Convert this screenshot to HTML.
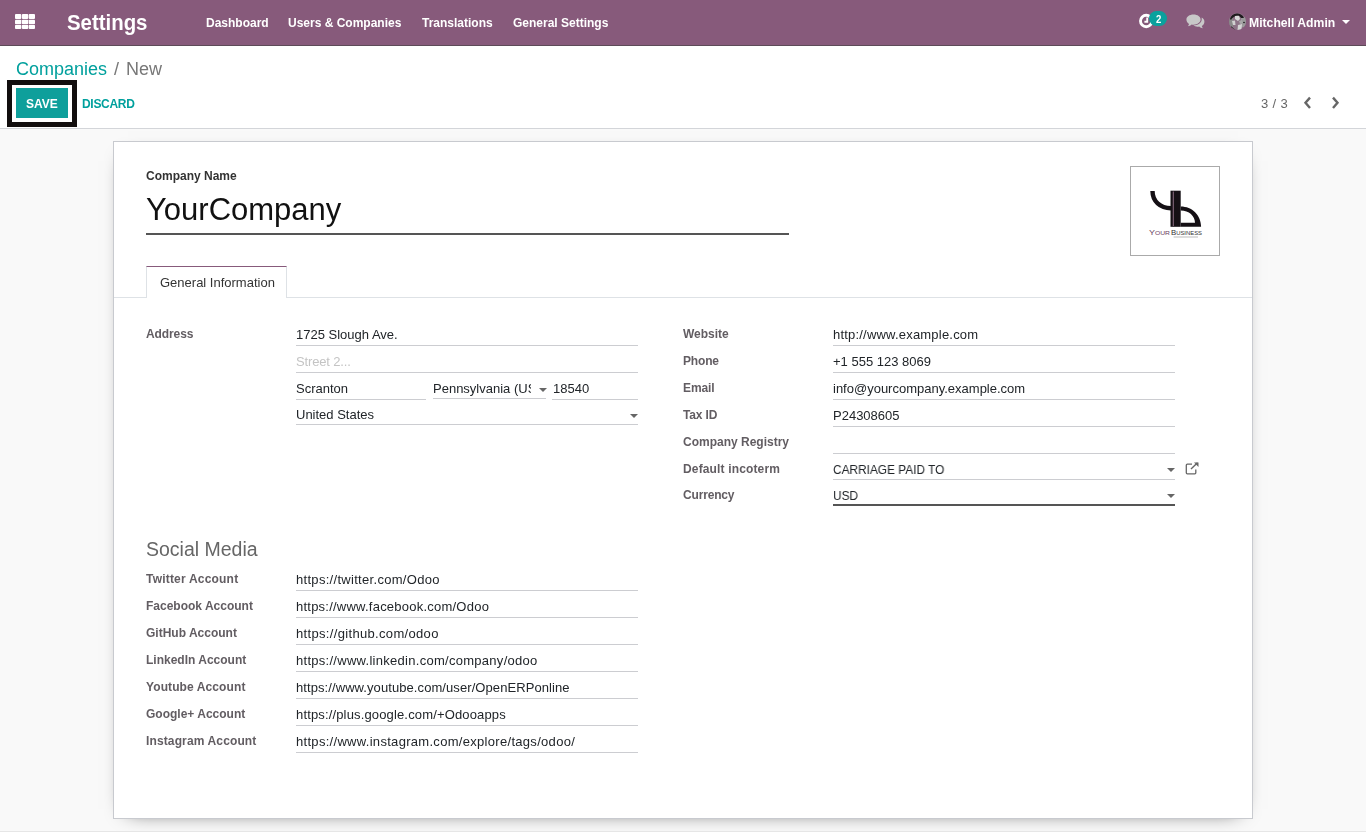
<!DOCTYPE html>
<html><head><meta charset="utf-8">
<style>
html,body{margin:0;padding:0;}
body{width:1366px;height:832px;position:relative;overflow:hidden;background:#f9f9f9;font-family:"Liberation Sans",sans-serif;}
.a{position:absolute;}
.t{position:absolute;white-space:nowrap;line-height:1;will-change:transform;}
.nav{left:0;top:0;width:1366px;height:45px;background:#875a7b;border-bottom:1px solid #5d4b58;}
.nm{font-size:12px;font-weight:700;color:#fff;top:17px;}
.cp{left:0;top:46px;width:1366px;height:82px;background:#fff;border-bottom:1px solid #d3d5d9;}
.sheet{left:113px;top:141px;width:1138px;height:676px;background:#fff;border:1px solid #c8cacf;box-shadow:0 5px 20px -15px #000;}
.lbl{font-size:12px;font-weight:700;color:#625d62;}
.val{font-size:13px;color:#212529;}
.ln{position:absolute;height:1px;background:#cccdd1;}
.car{position:absolute;width:0;height:0;border-left:4px solid transparent;border-right:4px solid transparent;border-top:4px solid #666;}
</style></head>
<body>
<!-- navbar -->
<div class="a nav"></div>
<svg class="a" style="left:15px;top:14px" width="20" height="15" viewBox="0 0 20 15">
<g fill="#fff">
<rect x="0" y="0" width="6.3" height="5" rx="0.9"/><rect x="6.9" y="0" width="6.3" height="5" rx="0.9"/><rect x="13.7" y="0" width="6.3" height="5" rx="0.9"/>
<rect x="0" y="5.7" width="6.3" height="4.4" rx="0.9"/><rect x="6.9" y="5.7" width="6.3" height="4.4" rx="0.9"/><rect x="13.7" y="5.7" width="6.3" height="4.4" rx="0.9"/>
<rect x="0" y="10.8" width="6.3" height="4.2" rx="0.9"/><rect x="6.9" y="10.8" width="6.3" height="4.2" rx="0.9"/><rect x="13.7" y="10.8" width="6.3" height="4.2" rx="0.9"/>
</g></svg>
<div class="t" style="left:67px;top:12px;font-size:20.4px;font-weight:700;color:#fff;transform:scaleY(1.07);transform-origin:0 0">Settings</div>
<div class="t nm" style="left:206px">Dashboard</div>
<div class="t nm" style="left:288px">Users &amp; Companies</div>
<div class="t nm" style="left:422px">Translations</div>
<div class="t nm" style="left:513px">General Settings</div>

<!-- clock icon -->
<svg class="a" style="left:1138px;top:13px" width="16" height="16" viewBox="0 0 16 16">
<circle cx="8.2" cy="8" r="5.7" fill="none" stroke="#fff" stroke-width="2.9"/>
<path d="M9.2 4.5 V8.8 H6.4" fill="none" stroke="#fff" stroke-width="1.9"/>
</svg>
<div class="a" style="left:1149px;top:11px;width:18px;height:15px;border-radius:7.5px;background:#0aa19d"></div>
<div class="t" style="left:1155.6px;top:14px;font-size:9.6px;font-weight:700;color:#fff;transform:scaleY(1.1);transform-origin:0 0">2</div>
<!-- chat icon -->
<svg class="a" style="left:1186px;top:14px" width="19" height="15" viewBox="0 0 19 15">
<path d="M7.5 0.5 C11.6 0.5 14.6 2.8 14.6 5.6 C14.6 8.4 11.6 10.7 7.5 10.7 C6.8 10.7 6.2 10.6 5.6 10.5 C4.6 11.4 3.2 12.1 1.8 12.3 C2.4 11.6 2.9 10.8 3 9.9 C1.4 9 0.4 7.4 0.4 5.6 C0.4 2.8 3.4 0.5 7.5 0.5 Z" fill="#c8c8c8"/>
<path d="M15.7 3.6 C17.3 4.5 18.4 6 18.4 7.7 C18.4 9.5 17.4 11 15.8 11.9 C15.9 12.8 16.4 13.6 17 14.3 C15.6 14.1 14.2 13.4 13.2 12.5 C12.6 12.7 12 12.7 11.4 12.7 C9.8 12.7 8.4 12.3 7.3 11.6 C11.9 11.5 15.7 8.9 15.7 5.6 Z" fill="#c8c8c8"/>
</svg>
<!-- avatar -->
<svg class="a" style="left:1229px;top:13px" width="17" height="17" viewBox="0 0 17 17">
<defs><clipPath id="cc"><circle cx="8.5" cy="8.5" r="8.5"/></clipPath></defs>
<g clip-path="url(#cc)">
<rect width="17" height="17" fill="#8d7387"/>
<rect x="0" y="4" width="4" height="10" fill="#8a8a8a"/>
<rect x="12" y="4" width="5" height="10" fill="#9a9a9a"/>
<path d="M1 6 C2 2 5 0.5 8.5 0.5 C11 0.5 14 2 15 5 L12 5 C11 3 9 2.5 7 3 C5 3.5 3 5 2 7 Z" fill="#1e1a1d"/>
<path d="M6 3 L10 2.8 L11 6 L9 8 L6 6 Z" fill="#d8d8d8"/>
<path d="M3 8 L6 7.5 L6.5 12 L4 12 Z" fill="#d0d0d0"/>
<path d="M9 12 L13 11 L12.5 17 L8.5 17 Z" fill="#d4d4d4"/>
<path d="M10 8 L13 7 L14 10 L11 11 Z" fill="#a8a8a8"/>
<path d="M2.5 13 C3.5 15 5 16 6.5 16.5 L5.5 17 L2 15 Z" fill="#222"/>
<circle cx="15" cy="9.5" r="0.8" fill="#111"/>
</g></svg>
<div class="t nm" style="left:1249px;font-size:12.2px">Mitchell Admin</div>
<div class="car" style="left:1342px;top:20px;border-top-color:#fff;border-left-width:4px;border-right-width:4px"></div>

<!-- control panel -->
<div class="a cp"></div>
<div class="t" style="left:16px;top:60px;font-size:18px;color:#00a09d">Companies</div>
<div class="t" style="left:113.5px;top:60px;font-size:18px;color:#777">/</div>
<div class="t" style="left:126.3px;top:60px;font-size:18px;color:#777">New</div>
<div class="a" style="left:7px;top:80px;width:60px;height:37px;border:5px solid #120e0e;background:#fff"></div>
<div class="a" style="left:16px;top:88px;width:52px;height:30px;background:#0e9f9b"></div>
<div class="t" style="left:26px;top:98px;font-size:12px;font-weight:700;color:#fff">SAVE</div>
<div class="t" style="left:81.5px;top:98px;font-size:12px;font-weight:700;color:#00a09d;letter-spacing:-0.3px">DISCARD</div>
<div class="t" style="left:1261px;top:97px;font-size:13px;color:#666;letter-spacing:0.35px">3 / 3</div>
<svg class="a" style="left:1302px;top:96px" width="40" height="14" viewBox="0 0 40 14">
<path d="M8 1.6 L3.5 6.8 L8 12" fill="none" stroke="#666" stroke-width="2.4"/>
<path d="M31 1.6 L35.5 6.8 L31 12" fill="none" stroke="#666" stroke-width="2.4"/>
</svg>

<!-- sheet -->
<div class="a sheet"></div>
<div class="t" style="left:146px;top:170px;font-size:12px;font-weight:700;color:#333">Company Name</div>
<div class="t" style="left:146px;top:194px;font-size:31px;color:#111">YourCompany</div>
<div class="a" style="left:146px;top:233px;width:643px;height:2px;background:#555"></div>

<!-- logo -->
<div class="a" style="left:1130px;top:166px;width:88px;height:88px;border:1px solid #aaa;background:#fff"></div>
<svg class="a" style="left:1131px;top:167px" width="88" height="88" viewBox="0 0 88 88">
<path d="M21.5 24 C21.5 34 29 41.2 40 41.2" fill="none" stroke="#151015" stroke-width="4.4"/>
<rect x="39.5" y="23.7" width="10.2" height="36.1" fill="#151015"/><rect x="41.8" y="24.5" width="0.9" height="34.5" fill="#9a7a90"/>
<path d="M49.7 39.4 C61 39.4 70.1 48 70.1 59.8 L49.7 59.8 Z M49.7 43.5 L49.7 55.8 L64 55.8 C64 49 58 43.5 49.7 43.5 Z" fill="#151015" fill-rule="evenodd"/>
<text x="18" y="68" font-family="Liberation Sans" font-size="6.4" fill="#6a3d5e" textLength="21" lengthAdjust="spacingAndGlyphs">Y<tspan font-size="4.8">OUR</tspan></text>
<text x="40" y="68" font-family="Liberation Sans" font-size="6.4" fill="#333" textLength="31" lengthAdjust="spacingAndGlyphs">B<tspan font-size="4.8">USINESS</tspan></text>
<rect x="42.6" y="69.5" width="24.4" height="1" fill="#bbb"/>
</svg>

<!-- tabs -->
<div class="ln" style="left:114px;top:297px;width:1138px;background:#dee2e6"></div>
<div class="a" style="left:146px;top:266px;width:139px;height:31px;border:1px solid #dee2e6;border-top-color:#875a7b;border-bottom:none;background:#fff"></div>
<div class="t" style="left:159.5px;top:276px;font-size:13px;color:#333">General Information</div>

<!-- left group -->
<div class="t lbl" style="left:146px;top:328px;letter-spacing:-0.1px">Address</div>
<div class="t val" style="left:296px;top:328px">1725 Slough Ave.</div>
<div class="ln" style="left:296px;top:345px;width:342px"></div>
<div class="t val" style="left:296px;top:355px;color:#c4c4c4;letter-spacing:-0.15px">Street 2...</div>
<div class="ln" style="left:296px;top:372px;width:342px"></div>
<div class="t val" style="left:296px;top:382px">Scranton</div>
<div class="ln" style="left:296px;top:399px;width:130px"></div>
<div class="a" style="left:433px;top:381px;width:98px;height:16px;overflow:hidden"><div class="t val" style="left:0;top:1px">Pennsylvania (US)</div></div>
<div class="car" style="left:538.5px;top:388px"></div>
<div class="ln" style="left:433px;top:398px;width:113px"></div>
<div class="t val" style="left:553px;top:382px">18540</div>
<div class="ln" style="left:552px;top:399px;width:86px"></div>
<div class="t val" style="left:296px;top:408px">United States</div>
<div class="car" style="left:630px;top:414px"></div>
<div class="ln" style="left:296px;top:424px;width:342px"></div>

<!-- right group -->
<div class="t lbl" style="left:683px;top:328px">Website</div>
<div class="t val" style="left:833px;top:328px;letter-spacing:0.2px">http://www.example.com</div>
<div class="ln" style="left:833px;top:345px;width:342px"></div>
<div class="t lbl" style="left:683px;top:355px;letter-spacing:-0.17px">Phone</div>
<div class="t val" style="left:833px;top:355px">+1 555 123 8069</div>
<div class="ln" style="left:833px;top:372px;width:342px"></div>
<div class="t lbl" style="left:683px;top:382px;letter-spacing:-0.09px">Email</div>
<div class="t val" style="left:833px;top:382px">info@yourcompany.example.com</div>
<div class="ln" style="left:833px;top:399px;width:342px"></div>
<div class="t lbl" style="left:683px;top:409px;letter-spacing:-0.15px">Tax ID</div>
<div class="t val" style="left:833px;top:409px">P24308605</div>
<div class="ln" style="left:833px;top:426px;width:342px"></div>
<div class="t lbl" style="left:683px;top:436px">Company Registry</div>
<div class="ln" style="left:833px;top:453px;width:342px"></div>
<div class="t lbl" style="left:683px;top:463px;letter-spacing:0.15px">Default incoterm</div>
<div class="t val" style="left:833px;top:463px;transform:scaleX(0.912);transform-origin:0 0">CARRIAGE PAID TO</div>
<div class="car" style="left:1167px;top:468px"></div>
<div class="ln" style="left:833px;top:479px;width:342px"></div>
<svg class="a" style="left:1185px;top:462px" width="15" height="13" viewBox="0 0 15 13">
<path d="M7 2.2 H2.3 Q1.3 2.2 1.3 3.2 V10.8 Q1.3 11.8 2.3 11.8 H9.8 Q10.8 11.8 10.8 10.8 V7.5" fill="none" stroke="#666" stroke-width="1.3"/>
<path d="M6 7 L12.5 0.8" fill="none" stroke="#666" stroke-width="1.4"/>
<path d="M9 0.5 H13.5 V5 Z" fill="#666"/>
</svg>
<div class="t lbl" style="left:683px;top:489px;letter-spacing:-0.17px">Currency</div>
<div class="t val" style="left:833px;top:489px;transform:scaleX(0.912);transform-origin:0 0">USD</div>
<div class="car" style="left:1167px;top:494px"></div>
<div class="a" style="left:833px;top:504px;width:342px;height:2px;background:#555"></div>

<!-- social media -->
<div class="t" style="left:146px;top:540px;font-size:19.5px;color:#666">Social Media</div>
<div class="t lbl" style="left:146px;top:573px;letter-spacing:0.2px">Twitter Account</div>
<div class="t val" style="left:296px;top:573px;letter-spacing:0.3px">https://twitter.com/Odoo</div>
<div class="ln" style="left:296px;top:590px;width:342px"></div>
<div class="t lbl" style="left:146px;top:600px">Facebook Account</div>
<div class="t val" style="left:296px;top:600px;letter-spacing:0.23px">https://www.facebook.com/Odoo</div>
<div class="ln" style="left:296px;top:617px;width:342px"></div>
<div class="t lbl" style="left:146px;top:627px">GitHub Account</div>
<div class="t val" style="left:296px;top:627px;letter-spacing:0.33px">https://github.com/odoo</div>
<div class="ln" style="left:296px;top:644px;width:342px"></div>
<div class="t lbl" style="left:146px;top:654px">LinkedIn Account</div>
<div class="t val" style="left:296px;top:654px;letter-spacing:0.28px">https://www.linkedin.com/company/odoo</div>
<div class="ln" style="left:296px;top:671px;width:342px"></div>
<div class="t lbl" style="left:146px;top:681px;letter-spacing:0.1px">Youtube Account</div>
<div class="t val" style="left:296px;top:681px;letter-spacing:0.08px">https://www.youtube.com/user/OpenERPonline</div>
<div class="ln" style="left:296px;top:698px;width:342px"></div>
<div class="t lbl" style="left:146px;top:708px">Google+ Account</div>
<div class="t val" style="left:296px;top:708px;letter-spacing:0.15px">https://plus.google.com/+Odooapps</div>
<div class="ln" style="left:296px;top:725px;width:342px"></div>
<div class="t lbl" style="left:146px;top:735px;letter-spacing:0.13px">Instagram Account</div>
<div class="t val" style="left:296px;top:735px;letter-spacing:0.3px">https://www.instagram.com/explore/tags/odoo/</div>
<div class="ln" style="left:296px;top:752px;width:342px"></div>

<div class="a" style="left:0;top:831px;width:1366px;height:1px;background:#e6e6e6"></div>
</body></html>
